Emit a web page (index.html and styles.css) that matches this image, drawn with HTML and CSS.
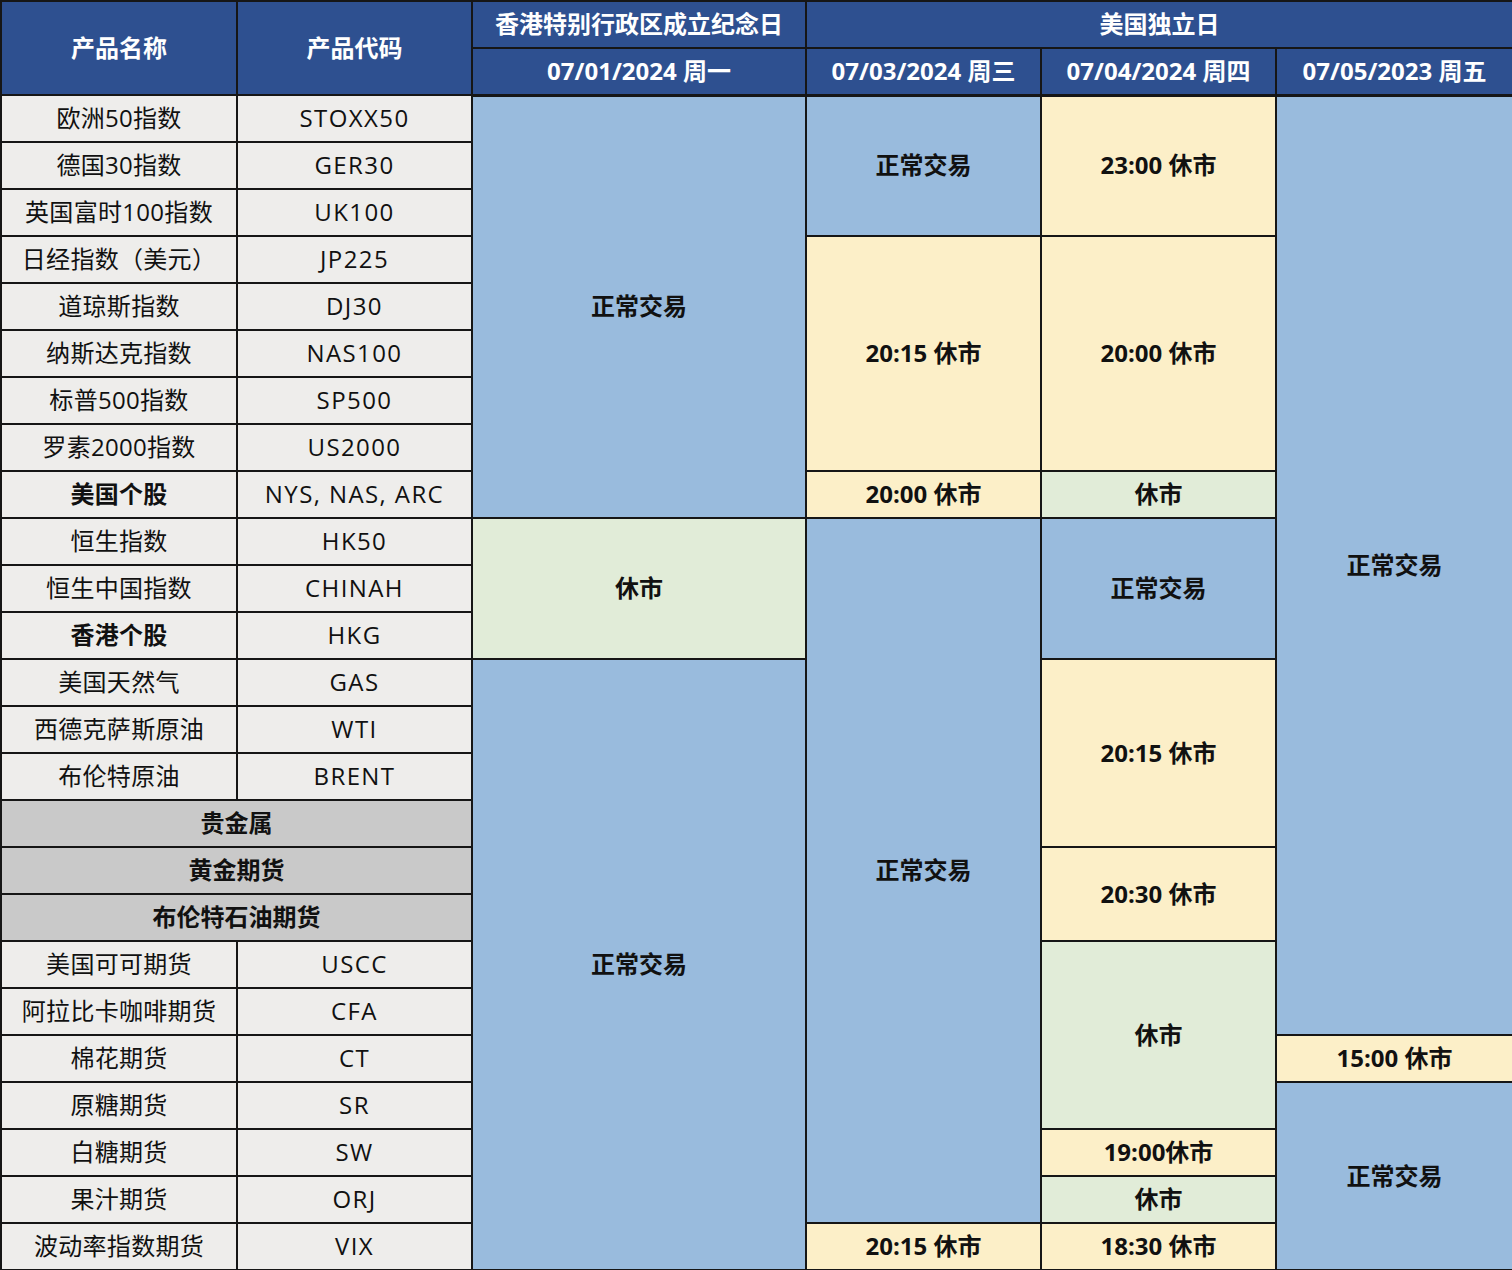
FILE: index.html
```html
<!DOCTYPE html>
<html lang="zh-CN">
<head>
<meta charset="utf-8">
<title>假期交易时间</title>
<link rel="stylesheet" href="styles.css">
</head>
<body>
<table class="sched">
  <colgroup>
    <col class="c1"><col class="c2"><col class="c3"><col class="c4"><col class="c5"><col class="c6">
  </colgroup>
  <thead>
    <tr>
      <th rowspan="2">产品名称</th>
      <th rowspan="2">产品代码</th>
      <th>香港特别行政区成立纪念日</th>
      <th colspan="3">美国独立日</th>
    </tr>
    <tr class="last">
      <th>07/01/2024 周一</th>
      <th>07/03/2024 周三</th>
      <th>07/04/2024 周四</th>
      <th>07/05/2023 周五</th>
    </tr>
  </thead>
  <tbody>
    <tr><td class="p">欧洲50指数</td><td class="p k">STOXX50</td>
      <td rowspan="9" class="s blue">正常交易</td>
      <td rowspan="3" class="s blue">正常交易</td>
      <td rowspan="3" class="s yellow">23:00 休市</td>
      <td rowspan="20" class="s blue">正常交易</td></tr>
    <tr><td class="p">德国30指数</td><td class="p k">GER30</td></tr>
    <tr><td class="p">英国富时100指数</td><td class="p k">UK100</td></tr>
    <tr><td class="p">日经指数（美元）</td><td class="p k">JP225</td>
      <td rowspan="5" class="s yellow">20:15 休市</td>
      <td rowspan="5" class="s yellow">20:00 休市</td></tr>
    <tr><td class="p">道琼斯指数</td><td class="p k">DJ30</td></tr>
    <tr><td class="p">纳斯达克指数</td><td class="p k">NAS100</td></tr>
    <tr><td class="p">标普500指数</td><td class="p k">SP500</td></tr>
    <tr><td class="p">罗素2000指数</td><td class="p k">US2000</td></tr>
    <tr><td class="p b">美国个股</td><td class="p k">NYS, NAS, ARC</td>
      <td class="s yellow">20:00 休市</td>
      <td class="s green">休市</td></tr>
    <tr><td class="p">恒生指数</td><td class="p k">HK50</td>
      <td rowspan="3" class="s green">休市</td>
      <td rowspan="15" class="s blue">正常交易</td>
      <td rowspan="3" class="s blue">正常交易</td></tr>
    <tr><td class="p">恒生中国指数</td><td class="p k">CHINAH</td></tr>
    <tr><td class="p b">香港个股</td><td class="p k">HKG</td></tr>
    <tr><td class="p">美国天然气</td><td class="p k">GAS</td>
      <td rowspan="13" class="s blue">正常交易</td>
      <td rowspan="4" class="s yellow">20:15 休市</td></tr>
    <tr><td class="p">西德克萨斯原油</td><td class="p k">WTI</td></tr>
    <tr><td class="p">布伦特原油</td><td class="p k">BRENT</td></tr>
    <tr><td colspan="2" class="g">贵金属</td></tr>
    <tr><td colspan="2" class="g">黄金期货</td>
      <td rowspan="2" class="s yellow">20:30 休市</td></tr>
    <tr><td colspan="2" class="g">布伦特石油期货</td></tr>
    <tr><td class="p">美国可可期货</td><td class="p k">USCC</td>
      <td rowspan="4" class="s green">休市</td></tr>
    <tr><td class="p">阿拉比卡咖啡期货</td><td class="p k">CFA</td></tr>
    <tr><td class="p">棉花期货</td><td class="p k">CT</td>
      <td class="s yellow">15:00 休市</td></tr>
    <tr><td class="p">原糖期货</td><td class="p k">SR</td>
      <td rowspan="4" class="s blue">正常交易</td></tr>
    <tr><td class="p">白糖期货</td><td class="p k">SW</td>
      <td class="s yellow">19:00休市</td></tr>
    <tr><td class="p">果汁期货</td><td class="p k">ORJ</td>
      <td class="s green">休市</td></tr>
    <tr><td class="p">波动率指数期货</td><td class="p k">VIX</td>
      <td class="s yellow">20:15 休市</td>
      <td class="s yellow">18:30 休市</td></tr>
  </tbody>
</table>
</body>
</html>
```

FILE: styles.css
```css
html, body {
  margin: 0;
  padding: 0;
  background: #ffffff;
}

.sched {
  border-collapse: collapse;
  table-layout: fixed;
  width: 1512px;
  font-family: "Open Sans", "Noto Sans CJK SC", sans-serif;
  font-size: 24px;
  color: #111111;
}

.c1 { width: 236px; }
.c2 { width: 235px; }
.c3 { width: 334px; }
.c4 { width: 235px; }
.c5 { width: 235px; }
.c6 { width: 237px; }

.sched tr {
  height: 47px;
}

.sched th,
.sched td {
  border: 2px solid #161616;
  padding: 0;
  text-align: center;
  vertical-align: middle;
  line-height: 1.2;
  white-space: nowrap;
}

.sched th {
  background: #2e5090;
  color: #ffffff;
  font-weight: 700;
}

.sched .last th {
  border-bottom-width: 3px;
}

.p {
  background: #eeedeb;
  font-weight: 400;
  letter-spacing: 0.3px;
}

.k {
  letter-spacing: 1.4px;
}

.b {
  font-weight: 700;
}

.g {
  background: #c9c9c9;
  font-weight: 700;
}

.s {
  font-weight: 700;
}

.blue { background: #99bbdd; }
.yellow { background: #fcefc8; }
.green { background: #e1ecd8; }
```
